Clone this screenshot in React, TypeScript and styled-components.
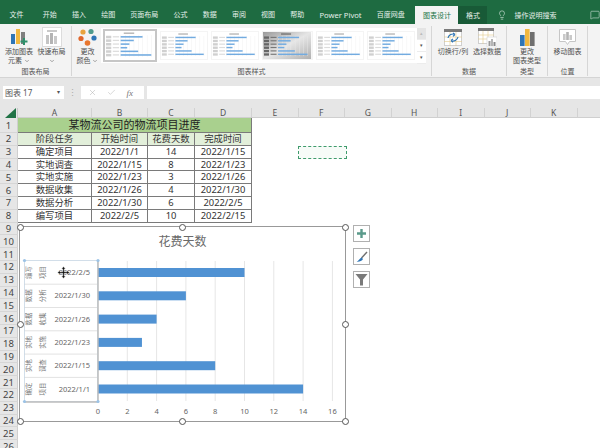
import React, { FC } from 'react';
import styled, { createGlobalStyle } from 'styled-components';
import { Check, ChevronDown, MessageSquare, Lightbulb, X } from 'lucide-react';

const GlobalStyle = createGlobalStyle`
  html, body {
    margin: 0;
    padding: 0;
    background: #fff;
    overflow: hidden;
  }
  * {
    box-sizing: border-box;
  }
`;

const FONT = `"Noto Sans", "Noto Sans CJK SC", sans-serif`;

const TABS = ['开始', '插入', '绘图', '页面布局', '公式', '数据', '审阅', '视图', '帮助', 'Power Pivot', '百度网盘'];
const COLUMNS = ['A', 'B', 'C', 'D', 'E', 'F', 'G', 'H', 'I', 'J', 'K', ''];
const ROWS = [
  ['确定项目', '2022/1/1', '14', '2022/1/15'],
  ['实地调查', '2022/1/15', '8', '2022/1/23'],
  ['实地实施', '2022/1/23', '3', '2022/1/26'],
  ['数据收集', '2022/1/26', '4', '2022/1/30'],
  ['数据分析', '2022/1/30', '6', '2022/2/5'],
  ['编写项目', '2022/2/5', '10', '2022/2/15'],
];
const HEAD = ['阶段任务', '开始时间', '花费天数', '完成时间'];
const BARS = [...ROWS].reverse();
const TICKS = [0, 2, 4, 6, 8, 10, 12, 14, 16];

const ThumbChart: FC<{ dark?: boolean }> = ({ dark }) => {
  const values = [10, 6, 4, 3, 8, 14];
  return (
    <svg width="100%" height="100%" viewBox="0 0 48 28" preserveAspectRatio="none">
      {dark && (
        <defs>
          <linearGradient id="thumbDark" x1="0" y1="0" x2="1" y2="1">
            <stop offset="0" stopColor="#9a9a9a" />
            <stop offset="0.5" stopColor="#e6e6e6" />
            <stop offset="1" stopColor="#b0b0b0" />
          </linearGradient>
        </defs>
      )}
      <rect width="48" height="28" fill={dark ? 'url(#thumbDark)' : '#fff'} />
      <rect x="18" y="1.5" width="10" height="1.2" fill={dark ? '#666' : '#aaa'} />
      {[0, 1, 2, 3, 4, 5, 6, 7].map(i => (
        <rect key={i} x={15 + i * 4.2} y="4" width="0.4" height="21" fill="#ececec" />
      ))}
      {values.map((v, i) => (
        <g key={i}>
          <rect x="1" y={4.6 + i * 3.5} width="5" height="2.4" fill={dark ? '#666' : '#d0d0d0'} />
          <rect x="7.5" y={5 + i * 3.5} width="6" height="1.2" fill={dark ? '#777' : '#dcdcdc'} />
          <rect x="15" y={4.9 + i * 3.5} width={v * 2.1} height="1.5" fill="#72abe0" />
        </g>
      ))}
    </svg>
  );
};

const AddElementIcon = () => (
  <svg width="18" height="18" viewBox="0 0 18 18">
    <rect x="1" y="6" width="4" height="10" fill="#2e75b6" />
    <rect x="6" y="1" width="4" height="15" fill="#f0b840" />
    <rect x="11" y="4" width="4" height="12" fill="#7f7f7f" />
    <path d="M14 10v7M10.5 13.5h7" stroke="#2f8f6b" strokeWidth="2" />
  </svg>
);

const QuickLayoutIcon = () => (
  <svg width="20" height="20" viewBox="0 0 20 20">
    <rect x="0.5" y="0.5" width="19" height="19" fill="#fff" stroke="#dcdcdc" />
    <rect x="5" y="3" width="10" height="2" fill="#c9c9c9" />
    <rect x="4" y="8" width="3" height="9" fill="#c4c4c4" />
    <rect x="8" y="6" width="3" height="11" fill="#b4b4b4" />
    <rect x="12" y="9" width="3" height="8" fill="#c9c9c9" />
  </svg>
);

const ColorsIcon = () => (
  <svg width="19" height="19" viewBox="0 0 19 19">
    <circle cx="5" cy="4" r="2.6" fill="#e8a33d" />
    <circle cx="13" cy="3.5" r="2.6" fill="#4f9a8c" />
    <circle cx="3" cy="10.5" r="2.6" fill="#e0662a" />
    <circle cx="16" cy="10" r="2.6" fill="#2e75b6" />
    <circle cx="9.5" cy="15" r="2.8" fill="#e8762d" />
  </svg>
);

const SwitchIcon = () => (
  <svg width="18" height="17" viewBox="0 0 18 17">
    <rect x="0.5" y="0.5" width="17" height="16" fill="#fff" stroke="#cfcfcf" />
    <rect x="0" y="0" width="18" height="3" fill="#7a7a7a" />
    <path d="M6 3v14M12 3v14M0 8h18M0 12.5h18" stroke="#e3c98a" strokeWidth="0.6" />
    <path d="M4 9a5 5 0 0 1 7-3.5M11 5.5l-2-1.5M11 5.5L9 7.4" stroke="#2e75b6" strokeWidth="1.2" fill="none" />
    <path d="M14 8a5 5 0 0 1-7 3.5M7 11.5l2-1.6M7 11.5l2 1.8" stroke="#2e75b6" strokeWidth="1.2" fill="none" />
  </svg>
);

const SelectDataIcon = () => (
  <svg width="19" height="19" viewBox="0 0 19 19">
    <rect x="0.5" y="0.5" width="15" height="15" fill="#fff" stroke="#cfcfcf" />
    <rect x="0" y="0" width="16" height="3" fill="#7a7a7a" />
    <path d="M5 3v13M10 3v13M0 7h16M0 11h16" stroke="#e3c98a" strokeWidth="0.6" />
    <rect x="9" y="9" width="10" height="10" fill="#fff" stroke="#cfcfcf" strokeWidth="0.6" />
    <rect x="10.5" y="13" width="2" height="5" fill="#9a9a9a" />
    <rect x="13" y="11" width="2" height="7" fill="#b5b5b5" />
    <rect x="15.5" y="14" width="2" height="4" fill="#8a8a8a" />
  </svg>
);

const ChartTypeIcon = () => (
  <svg width="15" height="17" viewBox="0 0 15 17">
    <rect x="0" y="6" width="4.6" height="11" fill="#2e75b6" />
    <rect x="5" y="0" width="4.6" height="17" fill="#f0b840" />
    <rect x="10" y="3" width="4.6" height="14" fill="#6f6f6f" />
  </svg>
);

const MoveChartIcon = () => (
  <svg width="17" height="17" viewBox="0 0 17 17">
    <path d="M0.5 0.5h16v12h-6l-2 3-2-3h-6z" fill="#fff" stroke="#c6c6c6" />
    <rect x="4" y="5" width="2.6" height="6" fill="#c9c9c9" />
    <rect x="7.2" y="3" width="2.6" height="8" fill="#b5b5b5" />
    <rect x="10.4" y="6" width="2.6" height="5" fill="#c9c9c9" />
  </svg>
);

const Chart: FC = () => {
  const zero = 78;
  const unit = 14.65;
  return (
    <ChartBox>
      <ChartTitle>花费天数</ChartTitle>
      <svg width="325" height="165" viewBox="0 30 325 165">
        {TICKS.map(t => (
          <g key={t}>
            <line x1={zero + t * unit} x2={zero + t * unit} y1="35" y2="175" stroke="#e6e6e6" strokeWidth="1" />
            <text x={zero + t * unit} y="188" fontSize="7.5" fill="#666" textAnchor="middle" fontFamily="Noto Sans">
              {t}
            </text>
          </g>
        ))}
        {BARS.map((row, i) => {
          const cy = 46.5 + i * 23.3;
          return (
            <g key={row[0]}>
              <rect x={zero} y={cy - 4.5} width={Number(row[2]) * unit} height="9" fill="#5092d3" />
              <text x="70" y={cy + 2.6} fontSize="7.5" fill="#666" textAnchor="end" fontFamily="Noto Sans">
                {row[1]}
              </text>
              <text
                transform={`rotate(-90 11 ${cy})`}
                x="11"
                y={cy}
                fontSize="6.4"
                fill="#777"
                textAnchor="middle"
                fontFamily="Noto Sans CJK SC"
              >
                {row[0].slice(0, 2)}
              </text>
              <text
                transform={`rotate(-90 25 ${cy})`}
                x="25"
                y={cy}
                fontSize="6.4"
                fill="#777"
                textAnchor="middle"
                fontFamily="Noto Sans CJK SC"
              >
                {row[0].slice(2)}
              </text>
              {i > 0 && <line x1="4" x2="77" y1={cy - 11.6} y2={cy - 11.6} stroke="#e2e2e2" />}
            </g>
          );
        })}
        <rect x="4.5" y="34.5" width="73" height="141" fill="none" stroke="#c8d6e4" strokeWidth="0.8" />
        <path d="M78 35v141H4" fill="none" stroke="#bdbdbd" strokeWidth="1.4" />
        {[
          [4.5, 34.5],
          [78, 34.5],
          [4.5, 175.5],
          [78, 175.5],
        ].map(([x, y]) => (
          <circle key={`${x}-${y}`} cx={x} cy={y} r="1.6" fill="#9cc3e6" />
        ))}
      </svg>
      <Handle $x="0%" $y="0%" />
      <Handle $x="50%" $y="0%" />
      <Handle $x="100%" $y="0%" />
      <Handle $x="0%" $y="50%" />
      <Handle $x="100%" $y="50%" />
      <Handle $x="0%" $y="100%" />
      <Handle $x="50%" $y="100%" />
      <Handle $x="100%" $y="100%" />
    </ChartBox>
  );
};

export default function App() {
  return (
    <Page>
      <GlobalStyle />
      <TabBar>
        <Tab $first>文件</Tab>
        {TABS.map(t => (
          <Tab key={t} $latin={t === 'Power Pivot'}>
            {t}
          </Tab>
        ))}
        <ActiveTab>图表设计</ActiveTab>
        <FormatTab>格式</FormatTab>
        <SearchHint>
          <Lightbulb size={10} strokeWidth={1.4} />
          操作说明搜索
        </SearchHint>
        <CommentIcon>
          <MessageSquare size={10} strokeWidth={1.3} />
        </CommentIcon>
      </TabBar>

      <Ribbon>
        <Group $w={72}>
          <GroupBody $pad={1}>
            <RibbonButton $w={36}>
              <IconSlot>
                <AddElementIcon />
              </IconSlot>
              <ButtonLabel>
                添加图表
                <br />
                元素 <ChevronDown size={6} />
              </ButtonLabel>
            </RibbonButton>
            <RibbonButton $w={29}>
              <IconSlot>
                <QuickLayoutIcon />
              </IconSlot>
              <ButtonLabel>
                快速布局
                <br />
                <ChevronDown size={6} />
              </ButtonLabel>
            </RibbonButton>
          </GroupBody>
          <GroupLabel>图表布局</GroupLabel>
        </Group>

        <Group $w={360}>
          <GroupBody $pad={2}>
            <RibbonButton $w={27}>
              <IconSlot>
                <ColorsIcon />
              </IconSlot>
              <ButtonLabel>
                更改
                <br />
                颜色 <ChevronDown size={6} />
              </ButtonLabel>
            </RibbonButton>
            <Gallery>
              <Thumb $selected $grow={52}>
                <ThumbChart />
              </Thumb>
              <Thumb $grow={48}>
                <ThumbChart />
              </Thumb>
              <Thumb $grow={48}>
                <ThumbChart />
              </Thumb>
              <Thumb $grow={50}>
                <ThumbChart dark />
              </Thumb>
              <Thumb $grow={48}>
                <ThumbChart />
              </Thumb>
              <Thumb $grow={48}>
                <ThumbChart />
              </Thumb>
            </Gallery>
            <GalleryScroll>
              <ScrollButton $muted>▴</ScrollButton>
              <ScrollButton>▾</ScrollButton>
              <ScrollButton>▾</ScrollButton>
            </GalleryScroll>
          </GroupBody>
          <GroupLabel>图表样式</GroupLabel>
        </Group>

        <Group $w={75}>
          <GroupBody $pad={4}>
            <RibbonButton $w={34}>
              <IconSlot>
                <SwitchIcon />
              </IconSlot>
              <ButtonLabel>切换行/列</ButtonLabel>
            </RibbonButton>
            <RibbonButton $w={34}>
              <IconSlot>
                <SelectDataIcon />
              </IconSlot>
              <ButtonLabel>选择数据</ButtonLabel>
            </RibbonButton>
          </GroupBody>
          <GroupLabel>数据</GroupLabel>
        </Group>

        <Group $w={41}>
          <GroupBody $pad={0}>
            <RibbonButton $w={40}>
              <IconSlot>
                <ChartTypeIcon />
              </IconSlot>
              <ButtonLabel>
                更改
                <br />
                图表类型
              </ButtonLabel>
            </RibbonButton>
          </GroupBody>
          <GroupLabel>类型</GroupLabel>
        </Group>

        <Group $w={40}>
          <GroupBody $pad={0}>
            <RibbonButton $w={39}>
              <IconSlot>
                <MoveChartIcon />
              </IconSlot>
              <ButtonLabel>移动图表</ButtonLabel>
            </RibbonButton>
          </GroupBody>
          <GroupLabel>位置</GroupLabel>
        </Group>
      </Ribbon>

      <FormulaBar>
        <NameBox>
          图表 17
          <Caret>▾</Caret>
        </NameBox>
        <Dots>⋮</Dots>
        <FormulaTools>
          <X size={9} strokeWidth={1.2} />
          <Check size={9} strokeWidth={1.2} />
          <FxLabel>fx</FxLabel>
        </FormulaTools>
        <FormulaInput />
      </FormulaBar>

      <SheetArea>
        <Sheet>
          <Corner>
            <svg width="11" height="10" viewBox="0 0 11 10">
              <path d="M11 0v10H0z" fill="#217346" />
            </svg>
          </Corner>
          {COLUMNS.map(c => (
            <ColHead key={c || 'L'}>{c}</ColHead>
          ))}

          {Array.from({ length: 26 }, (_, r) => (
            <React.Fragment key={r}>
              <RowHead>{r + 1}</RowHead>
              {r === 0 && <TitleCell>某物流公司的物流项目进度</TitleCell>}
              {r === 1 && HEAD.map(h => <HeadCell key={h}>{h}</HeadCell>)}
              {r >= 2 && r <= 7 && ROWS[r - 2].map((v, i) => <DataCell key={i}>{v}</DataCell>)}
              {r > 7 && [0, 1, 2, 3].map(i => <EmptyCell key={i} />)}
              {COLUMNS.slice(4).map((_, i) => (
                <EmptyCell key={`e${i}`} />
              ))}
            </React.Fragment>
          ))}
        </Sheet>

        <CopyMarquee />
        <Chart />

        <ChartTools>
          <ChartTool>
            <svg width="11" height="11" viewBox="0 0 11 11">
              <path d="M5.5 1v9M1 5.5h9" stroke="#5b9a8b" strokeWidth="2.4" />
            </svg>
          </ChartTool>
          <ChartTool>
            <svg width="12" height="12" viewBox="0 0 12 12">
              <path d="M11 1L5.5 7" stroke="#6f6f6f" strokeWidth="1.4" />
              <path d="M5.5 6.4L7 8C6 10 3 11 0.5 10.6 2.5 10 3.5 7.5 5.5 6.4z" fill="#2e75b6" />
            </svg>
          </ChartTool>
          <ChartTool>
            <svg width="13" height="13" viewBox="0 0 13 13">
              <path d="M0.5 1h12L8 6.5V12.5H5V6.5z" fill="#7a7a7a" />
            </svg>
          </ChartTool>
        </ChartTools>

        <MoveCursor>
          <svg width="13" height="13" viewBox="0 0 13 13">
            <path
              d="M6.5 0.5L8.5 3H7.3V5.7H10V4.5L12.5 6.5 10 8.5V7.3H7.3V10H8.5L6.5 12.5 4.5 10H5.7V7.3H3V8.5L0.5 6.5 3 4.5V5.7H5.7V3H4.5z"
              fill="#111"
              stroke="#fff"
              strokeWidth="0.5"
            />
          </svg>
        </MoveCursor>
      </SheetArea>
    </Page>
  );
}

const Page = styled.div`
  width: 600px;
  height: 448px;
  overflow: hidden;
  display: flex;
  flex-direction: column;
  font-family: ${FONT};
  color: #444;
  background: #fff;
`;

const TabBar = styled.div`
  height: 24px;
  flex: none;
  display: flex;
  align-items: flex-end;
  background: #1e6b41;
  color: #e4efe9;
  font-size: 7px;
  position: relative;
`;

const Tab = styled.div<{ $first?: boolean; $latin?: boolean }>`
  height: 24px;
  line-height: 30px;
  padding: 0 7.6px;
  margin-left: ${({ $first }) => ($first ? '2px' : '0')};
  margin-right: ${({ $first }) => ($first ? '4px' : '0')};
  font-size: ${({ $latin }) => ($latin ? '7.6px' : '7px')};
  white-space: nowrap;
`;

const ActiveTab = styled(Tab)`
  width: 43px;
  padding: 0;
  margin-left: 3px;
  height: 18px;
  line-height: 19px;
  text-align: center;
  background: #f3f3f3;
  color: #217346;
`;

const FormatTab = styled(Tab)`
  width: 29px;
  padding: 0;
  height: 18px;
  line-height: 19px;
  text-align: center;
  background: #185a37;
`;

const SearchHint = styled.div`
  display: flex;
  align-items: center;
  gap: 7px;
  height: 18px;
  margin-left: 10px;
`;

const CommentIcon = styled.div`
  position: absolute;
  right: 0;
  top: 10px;
  width: 10px;
  overflow: hidden;
`;

const Ribbon = styled.div`
  height: 54px;
  flex: none;
  display: flex;
  background: #f3f3f3;
  border-bottom: 1px solid #d4d4d4;
  padding-top: 2px;
`;

const Group = styled.div<{ $w: number }>`
  width: ${({ $w }) => $w}px;
  flex: none;
  display: flex;
  flex-direction: column;
  border-right: 1px solid #d6d6d6;
  height: 50px;
`;

const GroupBody = styled.div<{ $pad: number }>`
  height: 41px;
  display: flex;
  padding-left: ${({ $pad }) => $pad}px;
`;

const GroupLabel = styled.div`
  height: 9px;
  font-size: 7px;
  line-height: 9px;
  text-align: center;
  color: #555;
`;

const RibbonButton = styled.div<{ $w: number }>`
  width: ${({ $w }) => $w}px;
  flex: none;
  display: flex;
  flex-direction: column;
  align-items: center;
`;

const IconSlot = styled.div`
  height: 20px;
  margin-top: 1px;
  display: flex;
  align-items: center;
  justify-content: center;
`;

const ButtonLabel = styled.div`
  font-size: 7px;
  line-height: 9px;
  text-align: center;
  white-space: nowrap;
  color: #505050;
  svg {
    vertical-align: middle;
  }
`;

const Gallery = styled.div`
  width: 316px;
  height: 35px;
  margin-top: 2px;
  display: flex;
  align-items: center;
  gap: 3px;
  padding: 0 2px;
  background: #fff;
`;

const Thumb = styled.div<{ $selected?: boolean; $grow: number }>`
  flex: ${({ $grow }) => $grow} 1 0;
  height: ${({ $selected }) => ($selected ? '33px' : '29px')};
  border: ${({ $selected }) => ($selected ? '2px solid #c6c6c6' : '1px solid #f4f4f4')};
  display: flex;
`;

const GalleryScroll = styled.div`
  width: 9px;
  margin-top: 2px;
  height: 35px;
  display: flex;
  flex-direction: column;
`;

const ScrollButton = styled.div<{ $muted?: boolean }>`
  flex: 1;
  font-size: 5px;
  line-height: 11px;
  text-align: center;
  color: ${({ $muted }) => ($muted ? '#bbb' : '#555')};
  background: ${({ $muted }) => ($muted ? '#e4e4e4' : '#fff')};
  border-bottom: 1px solid #ececec;
`;

const FormulaBar = styled.div`
  height: 30px;
  flex: none;
  display: flex;
  align-items: flex-start;
  padding: 8px 0 0 3px;
  background: #e6e6e6;
`;

const NameBox = styled.div`
  width: 61px;
  height: 13px;
  background: #fff;
  font-size: 8px;
  line-height: 13px;
  padding-left: 2px;
  color: #555;
  position: relative;
`;

const Caret = styled.span`
  position: absolute;
  right: 4px;
  top: 0;
  font-size: 6px;
  color: #555;
`;

const Dots = styled.div`
  width: 17px;
  font-size: 9px;
  line-height: 13px;
  text-align: center;
  color: #aaa;
`;

const FormulaTools = styled.div`
  width: 63px;
  height: 13px;
  background: #fff;
  display: flex;
  align-items: center;
  justify-content: space-between;
  padding: 0 11px 0 7px;
  color: #a8a8a8;
`;

const FxLabel = styled.span`
  font-family: 'Liberation Serif', serif;
  font-style: italic;
  font-size: 9px;
  color: #777;
`;

const FormulaInput = styled.div`
  flex: 1;
  height: 13px;
  margin-left: 3px;
  background: #fff;
`;

const SheetArea = styled.div`
  flex: 1;
  position: relative;
  overflow: hidden;
`;

const Sheet = styled.div`
  display: grid;
  grid-template-columns: 18px 74px 56px 47px 57px repeat(8, 46.5px);
  grid-template-rows: 10px 15px;
  grid-auto-rows: 12.8px;
  width: 640px;
`;

const Corner = styled.div`
  background: #e6e6e6;
  display: flex;
  justify-content: flex-end;
  padding-right: 1px;
  border-right: 1px solid #c8c8c8;
`;

const ColHead = styled.div`
  background: #e6e6e6;
  border-right: 1px solid #d2d2d2;
  border-bottom: 1px solid #cfcfcf;
  font-size: 8.5px;
  line-height: 10px;
  text-align: center;
  color: #555;
`;

const RowHead = styled.div`
  background: #e6e6e6;
  border-right: 1px solid #cfcfcf;
  border-bottom: 1px solid #d6d6d6;
  font-size: 9.5px;
  line-height: 13px;
  text-align: center;
  color: #444;
  display: flex;
  align-items: center;
  justify-content: center;
`;

const DataCell = styled.div`
  border-right: 1px solid #7a7a7a;
  border-bottom: 1px solid #7a7a7a;
  font-size: 9.4px;
  line-height: 12px;
  text-align: center;
  color: #333;
  white-space: nowrap;
`;

const HeadCell = styled(DataCell)`
  background: #e2efda;
`;

const TitleCell = styled(DataCell)`
  grid-column: span 4;
  background: #a9d08e;
  font-size: 11px;
  line-height: 14px;
  color: #222;
`;

const EmptyCell = styled.div`
  background: #fff;
`;

const CopyMarquee = styled.div`
  position: absolute;
  left: 298px;
  top: 38px;
  width: 49px;
  height: 13px;
  border: 1px dashed #3f9b6c;
  background: #f7fbf8;
`;

const ChartBox = styled.div`
  position: absolute;
  left: 19px;
  top: 118px;
  width: 327px;
  height: 196px;
  background: #fff;
  border: 1px solid #999;
`;

const ChartTitle = styled.div`
  height: 29px;
  padding-top: 6px;
  font-size: 12px;
  line-height: 17px;
  text-align: center;
  color: #6a6a6a;
`;

const Handle = styled.div<{ $x: string; $y: string }>`
  position: absolute;
  left: ${({ $x }) => $x};
  top: ${({ $y }) => $y};
  width: 7px;
  height: 7px;
  margin: -3.5px 0 0 -3.5px;
  border-radius: 50%;
  border: 1px solid #555;
  background: #fff;
`;

const ChartTools = styled.div`
  position: absolute;
  left: 353px;
  top: 117px;
  display: flex;
  flex-direction: column;
  gap: 6px;
`;

const ChartTool = styled.div`
  width: 17px;
  height: 17px;
  background: #fff;
  border: 1px solid #b0b0b0;
  display: flex;
  align-items: center;
  justify-content: center;
`;

const MoveCursor = styled.div`
  position: absolute;
  left: 57px;
  top: 158px;
  line-height: 0;
`;
